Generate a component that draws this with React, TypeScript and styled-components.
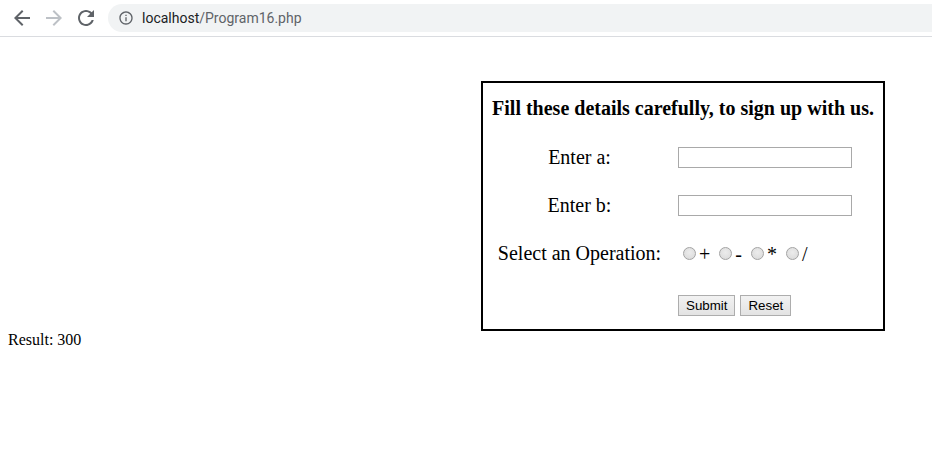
import React from "react";
import styled, { createGlobalStyle } from "styled-components";

const GlobalStyle = createGlobalStyle`
  html, body { margin: 0; padding: 0; background: #fff; }
  body { font-family: "Liberation Serif", "Times New Roman", serif; font-size: 16px; color: #000; }
`;

const Toolbar = styled.div`
  display: flex;
  align-items: center;
  height: 36px;
  padding-left: 6px;
  border-bottom: 1px solid #dadce0;
  background: #fff;
`;

const NavButton = styled.div<{ $disabled?: boolean }>`
  width: 32px;
  height: 36px;
  display: flex;
  align-items: center;
  justify-content: center;
  color: ${(p) => (p.$disabled ? "#bdc1c6" : "#5f6368")};
  svg { display: block; }
`;

const Omnibox = styled.div`
  flex: 1;
  margin-left: 6px;
  height: 28px;
  border-radius: 14px 0 0 14px;
  background: #f1f3f4;
  display: flex;
  align-items: center;
  padding-left: 10px;
  gap: 8px;
  color: #5f6368;
  font-family: "Segoe UI", Roboto, "Noto Sans", sans-serif;
  font-size: 14px;
`;

const Host = styled.span`
  color: #202124;
`;

const Page = styled.div`
  padding: 8px;
`;

const FormBox = styled.form`
  margin: 36px 0 0 473px;
  width: 400px;
  border: 2px solid #000;
  display: grid;
  grid-template-columns: 193px 1fr;
  grid-template-rows: 50px 48px 48px 49px 51px;
  align-items: center;
  font-size: 20px;
`;

const Heading = styled.div`
  grid-column: 1 / span 2;
  text-align: center;
  font-weight: bold;
  font-size: 20px;
`;

const Label = styled.div`
  text-align: center;
`;

const Field = styled.div<{ $offset?: number }>`
  padding-left: 2px;
  padding-top: ${(p) => p.$offset ?? 0}px;
  display: flex;
  align-items: center;
`;

const TextInput = styled.input`
  box-sizing: border-box;
  width: 174px;
  height: 21px;
  border: 1px solid #a9a9a9;
  padding: 1px 2px;
  margin: 0;
  outline: none;
  background: #fff;
`;

const Radio = styled.input`
  appearance: none;
  -webkit-appearance: none;
  box-sizing: border-box;
  width: 13px;
  height: 13px;
  margin: 0 3px 0 5px;
  border-radius: 50%;
  border: 1px solid #a3a3a3;
  background: radial-gradient(circle at 50% 40%, #ececec 0%, #d8d8d8 100%);
`;

const RadioText = styled.span`
  margin-right: 4px;
  line-height: 1;
`;

const Button = styled.button`
  box-sizing: border-box;
  height: 21px;
  margin: 0 5px 0 0;
  padding: 1px 7px;
  border: 1px solid #adadad;
  border-radius: 0;
  background: linear-gradient(#f2f2f2, #e3e3e3);
  font-family: "Liberation Sans", Arial, sans-serif;
  font-size: 13.33px;
  color: #000;
`;

const Result = styled.div`
  font-size: 16px;
`;

const ops = ["+", "-", "*", "/"];

export default function App() {
  return (
    <>
      <GlobalStyle />
      <Toolbar>
        <NavButton>
          <svg width="24" height="24" viewBox="0 0 24 24" fill="currentColor">
            <path d="M20 11H7.83l5.59-5.59L12 4l-8 8 8 8 1.41-1.41L7.83 13H20v-2z" />
          </svg>
        </NavButton>
        <NavButton $disabled>
          <svg width="24" height="24" viewBox="0 0 24 24" fill="currentColor">
            <path d="M12 4l-1.41 1.41L16.17 11H4v2h12.17l-5.58 5.59L12 20l8-8z" />
          </svg>
        </NavButton>
        <NavButton>
          <svg width="24" height="24" viewBox="0 0 24 24" fill="currentColor">
            <path d="M17.65 6.35C16.2 4.9 14.21 4 12 4c-4.42 0-7.990 3.58-7.99 8s3.57 8 7.99 8c3.73 0 6.84-2.55 7.73-6h-2.08c-.82 2.33-3.04 4-5.65 4-3.31 0-6-2.69-6-6s2.690-6 6-6c1.66 0 3.14.69 4.22 1.78L13 11h7V4l-2.35 2.35z" />
          </svg>
        </NavButton>
        <Omnibox>
          <svg width="16" height="16" viewBox="0 0 24 24" fill="#5f6368">
            <path d="M11 7h2v2h-2zm0 4h2v6h-2zm1-9C6.48 2 2 6.48 2 12s4.48 10 10 10 10-4.48 10-10S17.52 2 12 2zm0 18c-4.41 0-8-3.59-8-8s3.59-8 8-8 8 3.59 8 8-3.59 8-8 8z" />
          </svg>
          <span>
            <Host>localhost</Host>/Program16.php
          </span>
        </Omnibox>
      </Toolbar>
      <Page>
        <FormBox onSubmit={(e) => e.preventDefault()}>
          <Heading>Fill these details carefully, to sign up with us.</Heading>
          <Label>Enter a:</Label>
          <Field>
            <TextInput type="text" />
          </Field>
          <Label>Enter b:</Label>
          <Field>
            <TextInput type="text" />
          </Field>
          <Label>Select an Operation:</Label>
          <Field>
            {ops.map((o) => (
              <React.Fragment key={o}>
                <Radio type="radio" name="op" />
                <RadioText>{o}</RadioText>
              </React.Fragment>
            ))}
          </Field>
          <div />
          <Field $offset={4}>
            <Button type="submit">Submit</Button>
            <Button type="reset">Reset</Button>
          </Field>
        </FormBox>
        <Result>Result: 300</Result>
      </Page>
    </>
  );
}
